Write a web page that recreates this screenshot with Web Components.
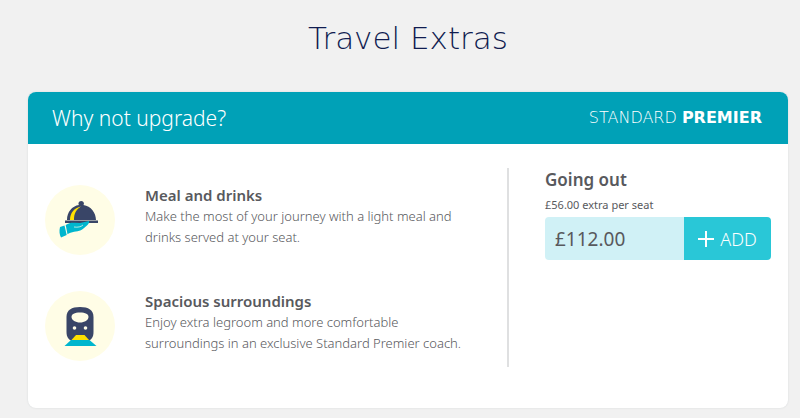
<!DOCTYPE html>
<html lang="en">
<head>
<meta charset="utf-8">
<title>Travel Extras</title>
<style>
  body { margin: 0; background: #f1f1f1; font-family: "Noto Sans", "Open Sans", sans-serif; color: #58595d; }
  b { font-weight: 700; }
</style>
</head>
<body>
<travel-extras>
  <upgrade-card>
    <span slot="title">Why not upgrade?</span>
    <span slot="brand">STANDARD <b>PREMIER</b></span>
    <upgrade-feature slot="features">
      <meal-icon slot="icon"></meal-icon>
      <span slot="title">Meal and drinks</span>
      Make the most of your journey with a light meal and drinks served at your seat.
    </upgrade-feature>
    <upgrade-feature slot="features">
      <train-icon slot="icon"></train-icon>
      <span slot="title">Spacious surroundings</span>
      Enjoy extra legroom and more comfortable surroundings in an exclusive Standard Premier coach.
    </upgrade-feature>
    <upgrade-offer slot="offer">
      <span slot="title">Going out</span>
      <span slot="note">£56.00 extra per seat</span>
      <span slot="price">£112.00</span>
    </upgrade-offer>
  </upgrade-card>
</travel-extras>
<script>
  const define = (name, html) => customElements.define(name, class extends HTMLElement {
    constructor() {
      super();
      this.attachShadow({ mode: 'open' }).innerHTML = html;
    }
  });

  define('travel-extras', `
    <style>
      :host { display: block; padding: 18px 12px 10px 28px; }
      h1 { margin: 0 0 34px; font: 200 31px/40px "DejaVu Sans", "Noto Sans", sans-serif; text-align: center; color: #101c50; }
    </style>
    <h1>Travel Extras</h1>
    <slot></slot>`);

  define('upgrade-card', `
    <style>
      :host { display: block; background: #fff; border-radius: 8px; overflow: hidden; box-shadow: 0 0 2px #d4d8d9; }
      header { display: flex; justify-content: space-between; align-items: center; min-height: 52px; padding: 0 26px 0 24px; background: #00a1b7; color: #fff; }
      h2 { margin: 0; font-size: 21px; line-height: 28px; font-weight: 300; }
      .brand { font: 200 16px/24px "DejaVu Sans", "Noto Sans", sans-serif; }
      .body { display: grid; grid-template-columns: minmax(0, 481fr) minmax(0, 262fr); padding: 24px 17px 41px 0; }
      .features { display: flex; flex-direction: column; gap: 36px; padding: 17px 28px 6px 17px; border-right: 2px solid #dfe0e1; }
      .offer { padding: 0 0 0 36px; }
    </style>
    <header><h2><slot name="title"></slot></h2><div class="brand"><slot name="brand"></slot></div></header>
    <div class="body">
      <div class="features"><slot name="features"></slot></div>
      <div class="offer"><slot name="offer"></slot></div>
    </div>`);

  define('upgrade-feature', `
    <style>
      :host { display: grid; grid-template-columns: 70px 1fr; gap: 30px; }
      .icon { height: 70px; border-radius: 50%; background: #fffde6; }
      h3 { margin: 0; font-size: 15px; line-height: 21px; font-weight: 600; }
      p { margin: 0; font-size: 13px; line-height: 21px; font-weight: 300; }
    </style>
    <div class="icon"><slot name="icon"></slot></div>
    <div><h3><slot name="title"></slot></h3><p><slot></slot></p></div>`);

  define('upgrade-offer', `
    <style>
      :host { display: block; }
      h3 { margin: 0 0 4px; font-size: 17px; line-height: 24px; font-weight: 600; }
      p { margin: 0 0 3px; font-size: 11px; line-height: 18px; }
      .row { display: grid; grid-template-columns: 139fr 87fr; min-height: 43px; border-radius: 4px; overflow: hidden; }
      .price { display: flex; align-items: center; padding: 0 10px; background: #d0f1f6; font-size: 19px; line-height: 28px; }
      button { display: flex; align-items: center; justify-content: center; gap: 6px; border: 0; padding: 0; background: #29c7d7; color: #fff; font: 300 18px/24px "Noto Sans", sans-serif; }
      svg { width: 16px; height: 16px; }
    </style>
    <h3><slot name="title"></slot></h3>
    <p><slot name="note"></slot></p>
    <div class="row">
      <div class="price"><slot name="price"></slot></div>
      <button type="button"><svg viewBox="0 0 16 16" aria-hidden="true"><path d="M8 0v16M0 8h16" stroke="#fff" stroke-width="2"/></svg>ADD</button>
    </div>`);

  define('meal-icon', `
    <style>:host, svg { display: block; }</style>
    <svg viewBox="0 0 70 70" aria-hidden="true">
      <path fill="#394567" d="M22 35c0-8 5-14 12-15-1-1-.6-4 2.200-4s3.300 3 2.200 4C46 21 51 28 51 35z"/>
      <path fill="#ffe000" d="M25 35c0-7 4-12 11-13.500-5 3-7 7-7 13.500z"/>
      <path fill="#394567" d="M20 35.500h33V38H20z"/>
      <path fill="#00b6ce" d="M15 42l4.500-1.500 2.200 9.500-5.700 2.500c-1.500-3-2-6.500-1-10.500zM20.700 40c3-2 6-2.500 9.300-2.200l5 .2L44 36c.8 2-2 5-6.500 8.200-4 2.800-9 1.800-13.800 4.300l-1.200.7z"/>
      <path d="M29 42c4 .6 7-.2 9-2" fill="none" stroke="#fffde6" stroke-width=".7"/>
    </svg>`);

  define('train-icon', `
    <style>:host, svg { display: block; }</style>
    <svg viewBox="0 0 70 70" aria-hidden="true">
      <path fill="#394567" d="M21.500 26c0-7 5-10 13.500-10s13.500 3 13.500 10v15c0 5-2 8-6 9H27.500c-4-1-6-4-6-9z"/>
      <path fill="#fffde6" d="M26.500 26c0-3 3-4.500 8.500-4.500s8.500 1.500 8.500 4.500-4 5.500-8.500 5.500-8.500-2.500-8.500-5.500z"/>
      <circle cx="29.500" cy="37" r="1.800" fill="#fffde6"/><circle cx="40.500" cy="37" r="1.800" fill="#fffde6"/>
      <path fill="#ffe000" d="M31 44h8.500l4.500 5H26.500z"/>
      <path fill="#00b6ce" d="M26 49h18.500l7 6H19.500z"/>
    </svg>`);
</script>
</body>
</html>
